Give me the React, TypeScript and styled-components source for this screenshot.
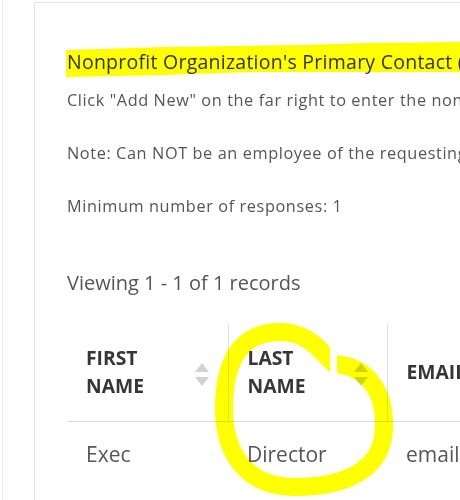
import React from 'react';
import styled, { createGlobalStyle } from 'styled-components';

const GlobalStyle = createGlobalStyle`
  html, body {
    margin: 0;
    padding: 0;
    background: #fff;
    overflow: hidden;
  }
  body {
    font-family: "Open Sans", "Noto Sans", Arial, sans-serif;
  }
`;

const Page = styled.div`
  position: relative;
  width: 460px;
  height: 500px;
  overflow: hidden;
  padding-left: 2px;
  box-sizing: border-box;
`;

const Frame = styled.div`
  height: 100%;
  border-left: 1px solid #ececec;
  padding: 2px 0 0 31px;
  box-sizing: border-box;
`;

const Card = styled.section`
  width: 900px;
  height: 100%;
  border-top: 1px solid #e4e4e4;
  border-left: 1px solid #e4e4e4;
  padding: 47px 0 0 32px;
  box-sizing: border-box;
  white-space: nowrap;
`;

const Title = styled.h3`
  margin: 0;
  font-size: 19.5px;
  letter-spacing: 0.25px;
  font-weight: 400;
  line-height: 24px;
  color: #333;
`;

const Note = styled.p<{ $gap: number }>`
  margin: ${(p) => p.$gap}px 0 0;
  font-size: 16.3px;
  letter-spacing: 0.6px;
  line-height: 20px;
  color: #555;
`;

const Count = styled.div`
  margin-top: 54px;
  font-size: 20px;
  line-height: 26px;
  color: #555;
`;

const Table = styled.table`
  margin-top: 27px;
  border-collapse: collapse;
  table-layout: fixed;
`;

const HeadCell = styled.th<{ $w: number }>`
  width: ${(p) => p.$w}px;
  height: 98px;
  padding: 0 19px;
  box-sizing: border-box;
  border-left: 1px solid #e2e2e2;
  border-bottom: 1px solid #dcdcdc;
  text-align: left;
  vertical-align: middle;
  &:first-child {
    border-left: none;
  }
`;

const HeadInner = styled.div`
  display: flex;
  align-items: center;
  justify-content: space-between;
`;

const HeadLabel = styled.span`
  max-width: 100px;
  font-size: 19.3px;
  font-weight: 700;
  line-height: 28px;
  color: #363636;
  white-space: normal;
  text-transform: uppercase;
`;

const Cell = styled.td`
  padding: 18px 19px 14px;
  font-size: 21px;
  line-height: 28px;
  color: #555;
  vertical-align: top;
`;

const SortIcon = styled.svg`
  flex: none;
  width: 14px;
  height: 24px;
  margin-top: 6px;
`;

const Marker = styled.svg`
  position: absolute;
  top: 0;
  left: 0;
  width: 460px;
  height: 500px;
  pointer-events: none;
  mix-blend-mode: multiply;
`;

const Sort = () => (
  <SortIcon viewBox="0 0 14 24">
    <path d="M7 0 L14 9 H0 Z" fill="#d3d3d3" />
    <path d="M0 14 H14 L7 23 Z" fill="#d3d3d3" />
  </SortIcon>
);

const columns = [
  { label: 'First Name', width: 161 },
  { label: 'Last Name', width: 159 },
  { label: 'Email', width: 260 },
  { label: 'Phone', width: 200 },
];

export default function App() {
  return (
    <>
      <GlobalStyle />
      <Page>
        <Frame>
          <Card>
            <Title>Nonprofit Organization's Primary Contact (Executive Director)</Title>
            <Note $gap={16}>
              Click "Add New" on the far right to enter the nonprofit organization's primary contact.
            </Note>
            <Note $gap={33}>Note: Can NOT be an employee of the requesting company.</Note>
            <Note $gap={33}>Minimum number of responses: 1</Note>
            <Count>Viewing 1 - 1 of 1 records</Count>
            <Table>
              <thead>
                <tr>
                  {columns.map((c) => (
                    <HeadCell key={c.label} $w={c.width}>
                      <HeadInner>
                        <HeadLabel>{c.label}</HeadLabel>
                        <Sort />
                      </HeadInner>
                    </HeadCell>
                  ))}
                </tr>
              </thead>
              <tbody>
                <tr>
                  <Cell>Exec</Cell>
                  <Cell>Director</Cell>
                  <Cell>email@nonprofit.org</Cell>
                  <Cell>555-555-5555</Cell>
                </tr>
              </tbody>
            </Table>
          </Card>
        </Frame>
        <Marker viewBox="0 0 460 500">
          <defs>
            <mask id="gap">
              <rect x="0" y="0" width="460" height="500" fill="#fff" />
              <rect x="330" y="330" width="7" height="60" fill="#000" />
            </mask>
          </defs>
          <polygon
            points="66,50 165,47 300,45 365,43 460,42 460,72 250,72 165,75 66,77"
            fill="#ffff00"
          />
          <path
            d="M334 364 C320 350 308 332 280 332 C245 332 225 355 224 405 C223 455 248 487 295 487 C345 487 383 470 384 428 C385 392 368 366 334 364 Z"
            fill="none"
            stroke="#ffff00"
            strokeWidth="18"
            mask="url(#gap)"
          />
        </Marker>
      </Page>
    </>
  );
}
